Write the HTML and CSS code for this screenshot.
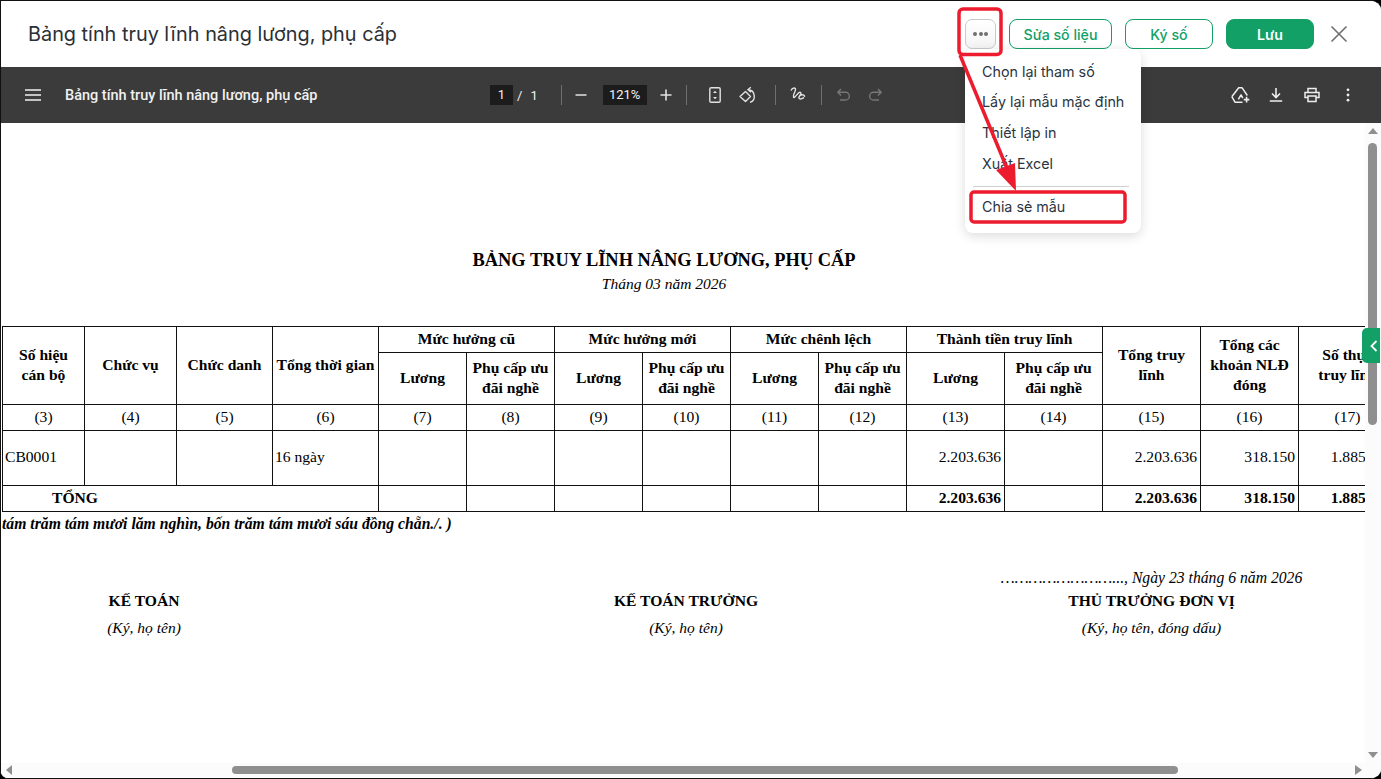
FILE: index.html
```html
<!DOCTYPE html>
<html lang="vi">
<head>
<meta charset="utf-8">
<title>Bảng tính truy lĩnh nâng lương, phụ cấp</title>
<link rel="stylesheet" href="styles.css">
</head>
<body>
<div class="window">
  <header class="head">
    <h1 class="head-title">Bảng tính truy lĩnh nâng lương, phụ cấp</h1>
    <div class="head-actions">
      <button class="more-btn"><span></span><span></span><span></span></button>
      <button class="btn btn-edit">Sửa số liệu</button>
      <button class="btn btn-sign">Ký số</button>
      <button class="btn btn-save">Lưu</button>
      <svg class="close" width="18" height="18" viewBox="0 0 18 18"><path d="M1.5 1.5 16.5 16.5M16.5 1.5 1.5 16.5" stroke="#707070" stroke-width="1.6" fill="none"/></svg>
    </div>
  </header>
  <div class="toolbar">
    <div class="tb-left">
      <svg class="ico" width="24" height="24" viewBox="0 0 24 24"><path d="M4 6.200h16v1.600H4zM4 11.200h16v1.600H4zM4 16.200h16v1.600H4z" fill="#f1f1f1"/></svg>
      <span class="doc-name">Bảng tính truy lĩnh nâng lương, phụ cấp</span>
    </div>
    <div class="tb-mid">
      <span class="page-box">1</span><span class="slash">/</span><span class="page-total">1</span>
      <i class="sep sep-a"></i>
      <svg class="ico" width="20" height="20" viewBox="0 0 20 20"><path d="M4.500 9.200h11v1.600h-11z" fill="#e3e3e3"/></svg>
      <span class="zoom-box">121%</span>
      <svg class="ico" width="20" height="20" viewBox="0 0 20 20"><path d="M4.500 9.200h11v1.600h-11zM9.200 4.500h1.600v11H9.200z" fill="#e3e3e3"/></svg>
      <i class="sep sep-b"></i>
      <svg class="ico fit" width="20" height="20" viewBox="0 0 20 20"><rect x="4.800" y="2.700" width="10.400" height="14.600" rx="1.300" fill="none" stroke="#e3e3e3" stroke-width="1.400"/><path d="M10 5.800 12 8H8zM10 14.200 8 12h4z" fill="#e3e3e3"/></svg>
      <svg class="ico rotate" width="20" height="20" viewBox="0 0 20 20"><path d="M2 11.500 7.500 6.500 12.500 11.500 7.500 16.500Z" fill="none" stroke="#e3e3e3" stroke-width="1.400" stroke-linejoin="round"/><path d="M10 4.800a6.500 6.500 0 0 1 2 12.600M12.800 2.200 10 4.800l3 2.400" fill="none" stroke="#e3e3e3" stroke-width="1.400"/></svg>
      <i class="sep sep-c"></i>
      <svg class="ico draw" width="20" height="20" viewBox="0 0 20 20"><path d="M3 5.500c1-2.500 4-3.500 4.500-1.500.5 2.500-3 5.500-2 8 .8 2 3.500-3 5.500-4.300 1.500-1 2.500.5 1.500 2-1 1.700-2.500 3-1 4 1.700 1 3-1 4.500-1M12 10.500c2-1.500 5-.8 4.500 1.500" fill="none" stroke="#e3e3e3" stroke-width="1.400"/></svg>
      <i class="sep sep-d"></i>
      <svg class="ico undo" width="20" height="20" viewBox="0 0 20 20"><path d="M7 4 3.800 7.300 7 10.500M4 7.300h7.500a3.700 3.700 0 0 1 0 7.700H6" fill="none" stroke="#777" stroke-width="1.400"/></svg>
      <svg class="ico redo" width="20" height="20" viewBox="0 0 20 20"><path d="M13 4 16.200 7.300 13 10.500M16 7.300H8.500a3.700 3.700 0 0 0 0 7.700H14" fill="none" stroke="#777" stroke-width="1.400"/></svg>
    </div>
    <div class="tb-right">
      <svg class="ico" width="20" height="20" viewBox="0 0 20 20"><path d="M1.800 11.700 8.700 2.700H12L17.300 10.500M1.800 11.700 5 17.200H12.500M8.300 14.300 11 10 12.800 13" fill="none" stroke="#eee" stroke-width="1.500" stroke-linejoin="round"/><path d="M15.800 11.800h1.600v2h2v1.600h-2v2h-1.600v-2h-2v-1.600h2z" fill="#eee"/></svg>
      <svg class="ico" width="20" height="20" viewBox="0 0 20 20"><path d="M10 3v9M6 8.500l4 4 4-4M3.800 16h12.400" fill="none" stroke="#eee" stroke-width="1.600"/></svg>
      <svg class="ico" width="20" height="20" viewBox="0 0 20 20"><path d="M6 7V3.500h8V7M6 12.500H3V7.500h14v5h-3" fill="none" stroke="#eee" stroke-width="1.500"/><path d="M6 11h8v5.500H6z" fill="none" stroke="#eee" stroke-width="1.500"/></svg>
      <svg class="ico" width="20" height="20" viewBox="0 0 20 20"><circle cx="10" cy="4.800" r="1.400" fill="#eee"/><circle cx="10" cy="10" r="1.400" fill="#eee"/><circle cx="10" cy="15.200" r="1.400" fill="#eee"/></svg>
    </div>
  </div>
  <div class="viewer">
    <div class="viewer-main">
      <div class="sheet">
        <h2 class="doc-title">BẢNG TRUY LĨNH NÂNG LƯƠNG, PHỤ CẤP</h2>
        <p class="doc-sub">Tháng 03 năm 2026</p>
        <table class="grid">
          <colgroup>
            <col class="c82"><col class="c92"><col class="c96"><col class="c106">
            <col class="c88"><col class="c88"><col class="c88"><col class="c88"><col class="c88"><col class="c88">
            <col class="c98"><col class="c98"><col class="c98"><col class="c98"><col class="c98"><col class="c98">
          </colgroup>
          <thead>
            <tr class="r-a">
              <th rowspan="2">Số hiệu<br>cán bộ</th><th rowspan="2">Chức vụ</th><th rowspan="2">Chức danh</th><th rowspan="2">Tổng thời gian</th>
              <th colspan="2">Mức hưởng cũ</th><th colspan="2">Mức hưởng mới</th><th colspan="2">Mức chênh lệch</th><th colspan="2">Thành tiền truy lĩnh</th>
              <th rowspan="2">Tổng truy<br>lĩnh</th><th rowspan="2">Tổng các<br>khoản NLĐ<br>đóng</th><th rowspan="2">Số thực<br>truy lĩnh</th>
            </tr>
            <tr class="r-b">
              <th>Lương</th><th>Phụ cấp ưu<br>đãi nghề</th><th>Lương</th><th>Phụ cấp ưu<br>đãi nghề</th><th>Lương</th><th>Phụ cấp ưu<br>đãi nghề</th><th>Lương</th><th>Phụ cấp ưu<br>đãi nghề</th>
            </tr>
          </thead>
          <tbody>
            <tr class="r-a nums">
              <td>(3)</td><td>(4)</td><td>(5)</td><td>(6)</td><td>(7)</td><td>(8)</td><td>(9)</td><td>(10)</td><td>(11)</td><td>(12)</td><td>(13)</td><td>(14)</td><td>(15)</td><td>(16)</td><td>(17)</td>
            </tr>
            <tr class="r-c">
              <td>CB0001</td><td></td><td></td><td>16 ngày</td><td></td><td></td><td></td><td></td><td></td><td></td><td class="n">2.203.636</td><td></td><td class="n">2.203.636</td><td class="n">318.150</td><td class="n">1.885.486</td>
            </tr>
            <tr class="r-a total">
              <td colspan="4" class="total-label">TỔNG</td><td></td><td></td><td></td><td></td><td></td><td></td><td class="n">2.203.636</td><td></td><td class="n">2.203.636</td><td class="n">318.150</td><td class="n">1.885.486</td>
            </tr>
          </tbody>
        </table>
        <p class="words">tám trăm tám mươi lăm nghìn, bốn trăm tám mươi sáu đồng chẵn./. )</p>
        <div class="signs">
          <div class="sign s1"><p class="sign-date">&nbsp;</p><p class="sign-role">KẾ TOÁN</p><p class="sign-note">(Ký, họ tên)</p></div>
          <div class="sign s2"><p class="sign-date">&nbsp;</p><p class="sign-role">KẾ TOÁN TRƯỞNG</p><p class="sign-note">(Ký, họ tên)</p></div>
          <div class="sign s3"><p class="sign-date">……………………..., Ngày 23 tháng 6 năm 2026</p><p class="sign-role">THỦ TRƯỞNG ĐƠN VỊ</p><p class="sign-note">(Ký, họ tên, đóng dấu)</p></div>
        </div>
      </div>
      <div class="vbar">
        <i class="arrow-up"></i>
        <div class="vtrack"><div class="vthumb"></div></div>
        <i class="arrow-down"></i>
      </div>
    </div>
    <div class="hbar">
      <i class="arrow-left"></i>
      <div class="htrack"><div class="hthumb"></div></div>
      <i class="arrow-right"></i>
    </div>
  </div>

  <div class="side-tab"><svg width="8" height="12" viewBox="0 0 8 12"><path d="M6.500 1 1.500 6l5 5" fill="none" stroke="#fff" stroke-width="1.800"/></svg></div>

  <ul class="menu">
    <li>Chọn lại tham số</li>
    <li>Lấy lại mẫu mặc định</li>
    <li>Thiết lập in</li>
    <li>Xuất Excel</li>
    <li class="divider"></li>
    <li class="share">Chia sẻ mẫu</li>
  </ul>

  <svg class="mark" width="1381" height="779" viewBox="0 0 1381 779">
    <rect x="959" y="9" width="42" height="45.500" rx="4" fill="none" stroke="#ec1c2e" stroke-width="3.500"/>
    <rect x="971" y="192" width="154" height="30" rx="3" fill="none" stroke="#ec1c2e" stroke-width="3.500"/>
    <path d="M960 55 1011 178" stroke="#ec1c2e" stroke-width="3.500" fill="none"/>
    <path d="M996 170 1016 191 1015 163Z" fill="#ec1c2e"/>
  </svg>
</div>
</body>
</html>
```
FILE: styles.css
```css
* { box-sizing: border-box; }
html, body { margin: 0; padding: 0; height: 100%; overflow: hidden; background: #000; }
p, h1, h2, ul { margin: 0; padding: 0; }

.window {
  position: relative;
  width: 1381px;
  height: 779px;
  display: flex;
  flex-direction: column;
  background: #fff;
  border-top: 1px solid #111;
  border-left: 1px solid #111;
  border-bottom: 1px solid #111;
  border-radius: 0 10px 10px 8px;
  overflow: hidden;
}

.head {
  height: 66px;
  flex: none;
  display: flex;
  align-items: center;
  justify-content: space-between;
  padding: 0 33px 0 27px;
  background: #fff;
}
.head-title { font: 400 19.850px "Inter", sans-serif; color: #2b2f36; }
.head-actions { display: flex; align-items: center; }
.more-btn {
  width: 31px; height: 30px; padding: 0;
  display: flex; align-items: center; justify-content: center; gap: 1.500px;
  background: linear-gradient(#fff, #f4f4f4);
  border: 1px solid #c9c9c9; border-radius: 7px;
  margin-right: 13px;
}
.more-btn span { width: 4px; height: 4px; border-radius: 50%; background: #707070; }
.btn {
  height: 30px; padding: 0;
  font: 500 14.200px "Inter", sans-serif;
  border-radius: 8px;
  border: 1px solid #12a067;
  background: #fff;
  color: #12a067;
}
.btn-edit { width: 103px; margin-right: 13px; }
.btn-sign { width: 88px; margin-right: 13px; }
.btn-save { width: 88px; margin-right: 16px; background: #12a067; color: #fff; font-weight: 600; }
.close { display: block; }

.toolbar {
  height: 56px;
  flex: none;
  display: flex;
  align-items: center;
  background: #3b3b3b;
  color: #f1f1f1;
  font-family: "Roboto", sans-serif;
  position: relative;
}
.ico { display: block; flex: none; }
.tb-left { width: 489px; padding-left: 20px; display: flex; align-items: center; gap: 20px; }
.doc-name { font: 500 14.500px "Roboto", sans-serif; white-space: nowrap; margin-top: 1px; }
.tb-mid { display: flex; align-items: center; font-size: 13px; }
.page-box { width: 23px; height: 20px; background: #1c1c1c; text-align: center; line-height: 20px; }
.slash { margin-left: 4px; }
.page-total { margin-left: 8px; }
.sep { display: block; width: 1px; height: 20px; background: #6f6f6f; flex: none; }
.sep-a { margin: 0 9px 0 23px; }
.zoom-box { width: 44px; height: 20px; background: #1c1c1c; text-align: center; line-height: 20px; margin: 0 9px 0 12px; }
.sep-b { margin: 0 18px 0 10px; }
.rotate { margin-left: 13px; }
.sep-c { margin: 0 12px 0 17px; }
.sep-d { margin: 0 12px 0 13px; }
.redo { margin-left: 11px; }
.tb-right { margin-left: auto; padding-right: 23px; display: flex; align-items: center; gap: 16px; }

.viewer { flex: 1; min-height: 0; display: flex; flex-direction: column; background: #fff; }
.viewer-main { flex: 1; min-height: 0; display: flex; }
.sheet {
  flex: 1; min-width: 0;
  overflow: hidden;
  padding-top: 126px;
  font-family: "Liberation Serif", serif;
  color: #000;
}
.doc-title { font: 700 18.400px/22px "Liberation Serif", serif; text-align: center; width: 1326px; }
.doc-sub { font: italic 400 15.500px/18px "Liberation Serif", serif; text-align: center; width: 1326px; margin-top: 4px; }

.grid {
  margin: 33px 0 0 1px;
  border-collapse: collapse;
  table-layout: fixed;
  width: 1492px;
  font-size: 15.600px;
}
.c82 { width: 82px; } .c92 { width: 92px; } .c96 { width: 96px; } .c106 { width: 106px; }
.c88 { width: 88px; } .c98 { width: 98px; }
.grid th, .grid td { border: 1px solid #111; padding: 0 2px 2px; text-align: center; line-height: 20px; overflow: hidden; white-space: nowrap; }
.grid th { font-weight: 700; line-height: 20px; }
.r-a { height: 26px; }
.r-b { height: 52px; }
.r-c { height: 55px; }
.grid .r-c td { text-align: left; }
.grid td.n { text-align: right; padding-right: 3px; }
.grid .r-c td.n { text-align: right; }
.total td { font-weight: 700; }
.grid td.total-label { text-align: left; padding-left: 49px; }

.words { font: italic 700 15.700px/22px "Liberation Serif", serif; margin-left: 1px; margin-top: 1px; white-space: nowrap; }

.signs { display: flex; margin: 33px 0 0 1px; width: 1310px; }
.sign { text-align: center; }
.s1 { width: 284px; }
.s2 { width: 572px; margin-left: 114px; }
.s3 { width: 303px; margin-left: 28px; }
.sign-date { font: italic 15.700px/20px "Liberation Serif", serif; white-space: nowrap; }
.sign-role { font: 700 15.600px/24px "Liberation Serif", serif; margin-top: 1px; }
.sign-note { font: italic 15.500px/24px "Liberation Serif", serif; margin-top: 3px; }

.vbar { width: 16px; flex: none; display: flex; flex-direction: column; align-items: center; background: #fbfbfb; padding: 5px 1px 5px 0; }
.vtrack { flex: 1; width: 100%; padding-top: 9px; display: flex; justify-content: center; }
.vthumb { width: 9px; height: 282px; background: #8f8f8f; border-radius: 5px; }
.arrow-up { width: 0; height: 0; border: 5px solid transparent; border-top: 0; border-bottom: 6px solid #8f8f8f; }
.arrow-down { width: 0; height: 0; border: 5px solid transparent; border-bottom: 0; border-top: 6px solid #8f8f8f; }

.hbar { height: 15px; flex: none; display: flex; align-items: center; background: #fbfbfb; padding: 0 19px 1px 5px; }
.htrack { flex: 1; padding-left: 220px; }
.hthumb { width: 946px; height: 8px; background: #8f8f8f; border-radius: 4px; }
.arrow-left { width: 0; height: 0; border: 5px solid transparent; border-left: 0; border-right: 6px solid #8f8f8f; }
.arrow-right { width: 0; height: 0; border: 5px solid transparent; border-right: 0; border-left: 7px solid #8f8f8f; }

.side-tab {
  position: absolute; left: 1361px; top: 327px;
  width: 18px; height: 35px;
  background: #12a067;
  border-radius: 5px 0 0 5px;
  display: flex; align-items: center; padding-left: 8px;
}

.menu {
  position: absolute; left: 964px; top: 48px;
  width: 176px; height: 184px;
  background: #fff;
  border-radius: 8px;
  box-shadow: 0 3px 12px rgba(0,0,0,.14);
  list-style: none;
  padding-top: 7.600px;
  font: 400 14.300px/30.700px "Inter", sans-serif;
  color: #2b3440;
}
.menu li { padding-left: 17px; white-space: nowrap; }
.menu .divider { height: 1px; margin: 7px 12px 0 8px; padding: 0; background: #cfcfcf; }
.menu .share { margin-top: 4.400px; }

.mark { position: absolute; left: -1px; top: -1px; pointer-events: none; }
```
